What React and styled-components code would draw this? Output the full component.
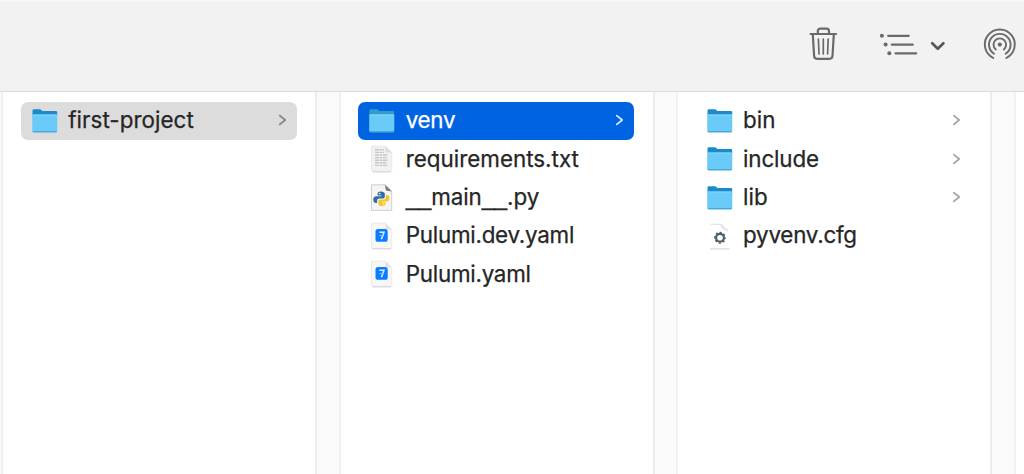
import React from "react";
import styled, { createGlobalStyle } from "styled-components";

const GlobalStyle = createGlobalStyle`
  * { box-sizing: border-box; }
  body { margin: 0; background: #fff; overflow: hidden; }
`;

const Finder = styled.main`
  width: 1024px;
  height: 474px;
  display: flex;
  flex-direction: column;
  overflow: hidden;
  background: #fff;
  font-family: Inter, "Liberation Sans", sans-serif;
`;

const Toolbar = styled.header`
  flex: 0 0 92px;
  display: flex;
  align-items: flex-start;
  padding: 24px 0 0 806px;
  background: #f2f2f2;
  border-top: 2px solid #f8f8f8;
  border-bottom: 1px solid #dadada;
  color: #6a6a6a;
`;

const ToolIcon = styled.svg`
  flex: none;
  display: block;
  width: ${(p) => p.$w}px;
  height: 38px;
  margin-right: ${(p) => p.$gap || 0}px;
  fill: none;
  stroke: currentColor;
  stroke-linecap: round;
  stroke-linejoin: round;
`;

const Columns = styled.div`
  flex: 1;
  display: flex;
  margin-left: -22px;
`;

const Gutter = styled.div`
  flex: 0 0 25.4px;
  background: #fafafa;
  border-left: 2px solid #ececec;
  border-right: 2px solid #f1f1f1;
`;

const Column = styled.ul`
  flex: 0 0 312px;
  margin: 0;
  padding: 9.6px 18px 0;
  list-style: none;
`;

const Row = styled.li`
  display: flex;
  align-items: center;
  height: 38.4px;
  margin: 0 0.4px 0 -0.4px;
  padding: 0 10px;
  border-radius: 7px;
  background: ${(p) => p.$bg || "transparent"};
  color: ${(p) => (p.$active ? "#fff" : "#262626")};
`;

const FileIcon = styled.svg`
  flex: none;
  display: block;
  width: 28px;
  height: 30px;
  margin-right: 9.3px;
`;

const Name = styled.span`
  flex: 1;
  padding-bottom: 1px;
  font-size: 22.4px;
  line-height: 30px;
  font-weight: 400;
  letter-spacing: ${(p) => p.$track || 0}px;
  white-space: nowrap;
  -webkit-text-stroke: 0.25px currentColor;
`;

const Underscores = styled.span`
  font-family: "Liberation Sans", Arial, sans-serif;
  font-size: 23px;
  line-height: 1;
`;

const Chevron = styled.svg`
  flex: none;
  width: 9px;
  height: 12px;
  margin: 0 0.3px 0.6px 0;
  fill: none;
  stroke: ${(p) => p.$color || "#a0a0a0"};
  stroke-width: 1.8;
  stroke-linecap: round;
  stroke-linejoin: round;
`;

const Folder = ({ active }) => (
  <FileIcon viewBox="0 0 28 30">
    <path d="M1.5 4.5q0-1.3 1.3-1.3h6q.9 0 1.6.8l.9 1h13.6q1.3 0 1.3 1.3V10H1.5z" fill={active ? "#329dcb" : "#1b8acb"} />
    <path d="M1.2 9.6q0-1 1-1h23.1q1 0 1 1v15.2q0 1.4-1.4 1.4H2.6q-1.4 0-1.4-1.4z" fill="#6bcbf8" />
    <path d="M1.6 9h24.2" stroke="#8fdcff" strokeWidth=".9" />
    <path d="M1.8 25.8h24" stroke="#3d9fce" strokeWidth="1.1" />
  </FileIcon>
);

const Page = ({ fill = "#f7f7f7", fold = "#e2e2e2" }) => (
  <>
    <path d="M3.8 2.2h13.6l6.4 6.4v17.6q0 1.6-1.6 1.6h-17q-1.6 0-1.6-1.6V3q0-.8.2-.8z" fill={fill} stroke="#e6e6e6" strokeWidth=".9" />
    <path d="M17.4 2.2v4.9q0 1.5 1.5 1.5h4.9z" fill={fold} />
    <path d="M4.5 27.8h18.4" stroke="#d2d2d2" strokeWidth=".9" />
  </>
);

const TextFile = () => (
  <FileIcon viewBox="0 0 28 30">
    <Page fill="#f1f1f1" fold="#dcdcdc" />
    <path
      d="M7 5.8h9M7 8.4h9M7 11h13M7 13.6h12M7 16.2h13M7 18.8h11M7 21.4h13"
      stroke="#c6c6c6"
      strokeWidth="1.4"
      strokeDasharray="4 .7 2.5 .6"
    />
  </FileIcon>
);

const PythonFile = () => (
  <FileIcon viewBox="0 0 28 30">
    <path d="M3.5 1.8h14l6.2 6.2v19.4H3.5z" fill="#f5f5f5" stroke="#cecece" />
    <path d="M16.8 1.8l7 6.6-5.8-1z" fill="#777" />
    <path d="M12.8 8.4c-2.7 0-3.2 1-3.2 2.4v1.8h3.9v.7H8.2c-1.9 0-2.9 1.3-2.9 3.4s1 3.2 2.5 3.2h1.3v-2.1c0-1.4 1-2.3 2.4-2.3h3.3c1.2 0 2-.9 2-2v-2.7c0-1.5-1.4-2.4-4-2.4z" fill="#2c6fa5" />
    <path d="M15.2 23c2.7 0 3.2-1 3.2-2.4v-1.4h-3.7v-.8h4.9c1.9 0 2.6-1.2 2.6-3.1 0-2.1-.8-3.2-2.3-3.2h-1.3v2.1c0 1.4-1 2.4-2.4 2.4h-3.1c-1.2 0-2 .8-2 1.9v2.2c0 1.5 1.4 2.3 4.1 2.3z" transform="translate(-.8 0)" fill="#f6c62d" />
    <circle cx="11.7" cy="10.6" r=".8" fill="#fff" />
    <circle cx="15.6" cy="21" r=".8" fill="#fff" />
  </FileIcon>
);

const YamlFile = () => (
  <FileIcon viewBox="0 0 28 30">
    <Page />
    <rect x="7.5" y="8" width="12.2" height="12.8" rx="2.6" fill="#0a7cff" />
    <path d="M11.4 11.2h4.6l-2.6 7" fill="none" stroke="#d5e9ff" strokeWidth="1.6" />
    <path d="M11.2 14.6h4.2" stroke="#76b7ff" strokeWidth="1" />
  </FileIcon>
);

const ConfigFile = () => (
  <FileIcon viewBox="0 0 28 30">
    <path d="M4.5 3.2h10.5l3 3.4 4 2.8" fill="none" stroke="#dcdcdc" strokeWidth="1.1" />
    <path d="M14.5 3.2l1.8 3.8q.5 1.3 2 1.3l4 1.8" fill="none" stroke="#e6e6e6" strokeWidth="1.1" />
    <path d="M4.3 27.9h19" stroke="#d2d2d2" strokeWidth="1.1" />
    <circle cx="14" cy="16.7" r="3.9" fill="none" stroke="#4b5f6a" strokeWidth="2.2" />
    <circle cx="14" cy="16.7" r="5.3" fill="none" stroke="#4b5f6a" strokeWidth="1.3" strokeDasharray="2.2 1.96" strokeDashoffset="1.1" />
  </FileIcon>
);

const icons = { folder: Folder, text: TextFile, python: PythonFile, yaml: YamlFile, config: ConfigFile };

const columns = [
  [{ name: "first-project", kind: "folder", bg: "#dcdcdc", arrow: "#858585", track: 0.04 }],
  [
    { name: "venv", kind: "folder", bg: "#0063e1", active: true, arrow: "#d5e6ff", track: -0.3 },
    { name: "requirements.txt", kind: "text", track: 0 },
    { name: "__main__.py", kind: "python", track: -0.08 },
    { name: "Pulumi.dev.yaml", kind: "yaml", track: -0.25 },
    { name: "Pulumi.yaml", kind: "yaml", track: -0.25 },
  ],
  [
    { name: "bin", kind: "folder", arrow: "#a5a5a5", track: 0 },
    { name: "include", kind: "folder", arrow: "#a5a5a5", track: -0.15 },
    { name: "lib", kind: "folder", arrow: "#a5a5a5", track: 0 },
    { name: "pyvenv.cfg", kind: "config", track: -0.24 },
  ],
];

const Entry = ({ item }) => {
  const Icon = icons[item.kind];
  return (
    <Row $bg={item.bg} $active={item.active}>
      <Icon active={item.active} />
      <Name $track={item.track}>
        {item.name
          .split(/(_+)/)
          .map((part, i) => (part.startsWith("_") ? <Underscores key={i}>{part}</Underscores> : part))}
      </Name>
      {item.arrow && (
        <Chevron viewBox="0 0 9 12" $color={item.arrow}>
          <path d="M1.8 1.6L7.2 6 1.8 10.4" />
        </Chevron>
      )}
    </Row>
  );
};

export default function App() {
  return (
    <>
      <GlobalStyle />
      <Finder>
        <Toolbar>
          <ToolIcon viewBox="0 0 34 38" $w={34} $gap={38}>
            <path d="M4.6 8h25.4" strokeWidth="2.2" />
            <path d="M11.8 8V5.1q0-2.5 2.5-2.5h6.2q2.5 0 2.5 2.5V8" strokeWidth="2.2" />
            <path d="M6.8 8.5l1.3 21.5q.2 2.8 3 2.8h12.4q2.8 0 3-2.8l1.3-21.5" strokeWidth="2.2" />
            <path d="M12.4 13l.6 15M17.3 13v15M22.2 13l-.6 15" strokeWidth="1.7" />
          </ToolIcon>
          <ToolIcon viewBox="0 0 42 38" $w={42} $gap={6}>
            <path d="M10.2 9.8h20.6M13.8 18.6h21M17.6 27.3h20.6" strokeWidth="2.3" />
            <g fill="currentColor" stroke="none">
              <circle cx="3.9" cy="9.8" r="2" />
              <circle cx="7.6" cy="18.6" r="2" />
              <circle cx="11.3" cy="27.3" r="2" />
            </g>
          </ToolIcon>
          <ToolIcon viewBox="0 0 24 38" $w={24} $gap={32}>
            <path d="M6.2 17.2l5.6 5.6 5.6-5.6" strokeWidth="2.7" stroke="#575757" />
          </ToolIcon>
          <ToolIcon viewBox="0 0 36 38" $w={36}>
            <g strokeWidth="1.9">
              <path d="M11.3 32A15 15 0 1 1 24.3 32" />
              <path d="M12 27.8A10.8 10.8 0 1 1 23.6 27.8" />
              <path d="M13.8 23.5A6.3 6.3 0 1 1 21.8 23.5" />
            </g>
            <circle cx="17.8" cy="18.6" r="2.1" fill="currentColor" stroke="none" />
          </ToolIcon>
        </Toolbar>
        <Columns>
          {columns.map((items, i) => (
            <React.Fragment key={i}>
              <Gutter />
              <Column>
                {items.map((item) => (
                  <Entry key={item.name} item={item} />
                ))}
              </Column>
            </React.Fragment>
          ))}
          <Gutter />
        </Columns>
      </Finder>
    </>
  );
}
